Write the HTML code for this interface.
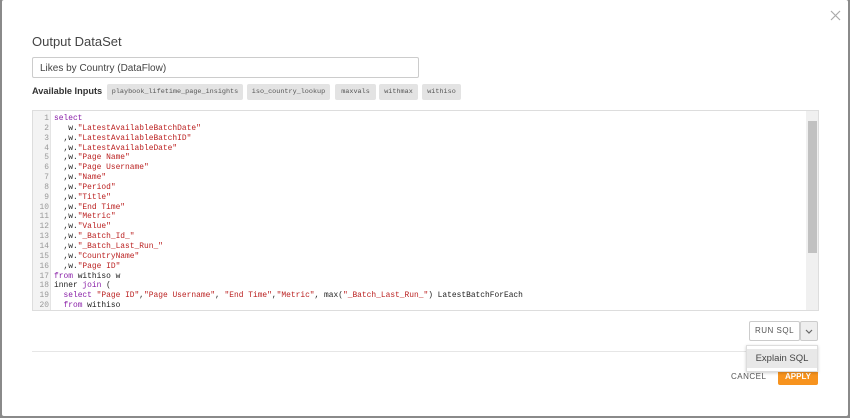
<!DOCTYPE html>
<html><head><meta charset="utf-8"><style>
*{box-sizing:border-box;margin:0;padding:0}
body{width:850px;height:418px;background:#8a8a8a;font-family:"Liberation Sans",sans-serif;position:relative;overflow:hidden}
.modal{position:absolute;left:2px;top:0;width:846px;height:416px;background:#fff;border-radius:2px}
.abs{position:absolute}
h1{position:absolute;left:30px;top:34px;font-size:13px;font-weight:normal;color:#444}
.inp{left:30px;top:57px;width:387px;height:21px;border:1px solid #ccc;border-radius:2px;font-size:10px;color:#444;padding:5px 7px}
.lbl{left:30px;top:86px;font-size:9.2px;font-weight:bold;color:#333;white-space:nowrap}
.tag{top:84px;height:16px;background:#e3e3e3;border-radius:2px;font-family:"Liberation Mono",monospace;font-size:6.8px;color:#555;line-height:16px;text-align:center;white-space:nowrap}
.code{left:30px;top:110px;width:787px;height:201px;border:1px solid #ddd;overflow:hidden}
.gut{position:absolute;left:0;top:0;width:18px;height:100%;background:#f3f3f3;border-right:1px solid #e4e4e4}
pre{font-family:"Liberation Mono",monospace;font-size:7.9px;line-height:9.84px;color:#222}
.ln{position:absolute;left:0;top:3px;width:16px;text-align:right;color:#999}
.src{position:absolute;left:21px;top:3px}
.k{color:#8a20a8}.s{color:#b22}
.sb{position:absolute;right:0;top:0;width:12px;height:100%;background:#f0f0f0}
.th{position:absolute;left:2px;top:10px;width:9px;height:132px;background:#c1c1c1}
</style></head><body><div class="modal">
<svg class="abs" style="left:828px;top:10px" width="11" height="11"><path d="M1 1L10 10M10 1L1 10" stroke="#aaa" stroke-width="1.2"/></svg>
<h1>Output DataSet</h1>
<div class="abs inp">Likes by Country (DataFlow)</div>
<div class="abs lbl">Available Inputs</div>
<div class="abs tag" style="left:105px;width:136px">playbook_lifetime_page_insights</div>
<div class="abs tag" style="left:245px;width:83px">iso_country_lookup</div>
<div class="abs tag" style="left:333px;width:41px">maxvals</div>
<div class="abs tag" style="left:377px;width:39px">withmax</div>
<div class="abs tag" style="left:420px;width:39px">withiso</div>
<div class="abs code"><div class="gut"></div>
<pre class="ln">1
2
3
4
5
6
7
8
9
10
11
12
13
14
15
16
17
18
19
20</pre>
<pre class="src"><span class="k">select</span>
   w.<span class="s">"LatestAvailableBatchDate"</span>
  ,w.<span class="s">"LatestAvailableBatchID"</span>
  ,w.<span class="s">"LatestAvailableDate"</span>
  ,w.<span class="s">"Page Name"</span>
  ,w.<span class="s">"Page Username"</span>
  ,w.<span class="s">"Name"</span>
  ,w.<span class="s">"Period"</span>
  ,w.<span class="s">"Title"</span>
  ,w.<span class="s">"End Time"</span>
  ,w.<span class="s">"Metric"</span>
  ,w.<span class="s">"Value"</span>
  ,w.<span class="s">"_Batch_Id_"</span>
  ,w.<span class="s">"_Batch_Last_Run_"</span>
  ,w.<span class="s">"CountryName"</span>
  ,w.<span class="s">"Page ID"</span>
<span class="k">from</span> withiso w
inner <span class="k">join</span> (
  <span class="k">select</span> <span class="s">"Page ID"</span>,<span class="s">"Page Username"</span>, <span class="s">"End Time"</span>,<span class="s">"Metric"</span>, max(<span class="s">"_Batch_Last_Run_"</span>) LatestBatchForEach
  <span class="k">from</span> withiso</pre>
<div class="sb"><div class="th"></div></div></div>
<div class="abs" style="left:747px;top:321px;width:51px;height:20px;border:1px solid #ccc;border-radius:2px;font-size:8px;color:#555;text-align:center;line-height:18px;letter-spacing:.5px">RUN SQL</div>
<div class="abs" style="left:798px;top:321px;width:18px;height:20px;border:1px solid #ccc;background:#eee;border-radius:2px"><svg width="16" height="18"><path d="M5 8L8 11L11 8" fill="none" stroke="#666" stroke-width="1.2"/></svg></div>
<div class="abs" style="left:30px;top:351px;width:714px;height:1px;background:#e6e6e6"></div>
<div class="abs" style="left:776px;top:368px;width:40px;height:17px;background:#f7931e;border-radius:2px;color:#fff;font-size:8px;font-weight:bold;text-align:center;line-height:17px">APPLY</div>
<div class="abs" style="left:729px;top:372px;font-size:8px;color:#555;letter-spacing:.5px">CANCEL</div>
<div class="abs" style="left:744px;top:345px;width:72px;height:27px;background:#fff;border:1px solid #ddd;box-shadow:0 1px 3px rgba(0,0,0,.2)"><div style="margin-top:3px;height:19px;background:#e8e8e8;font-size:9.5px;color:#444;text-align:center;line-height:19px">Explain SQL</div></div>
</div></body></html>
